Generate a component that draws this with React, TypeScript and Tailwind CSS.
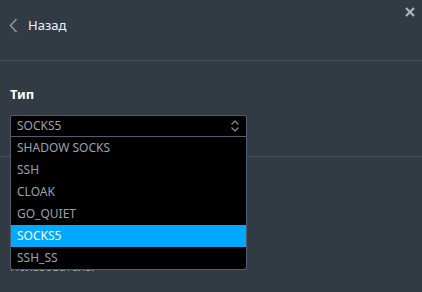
import React from "react";

const items = ["SHADOW SOCKS", "SSH", "CLOAK", "GO_QUIET", "SOCKS5", "SSH_SS"];

export default function App() {
  return (
    <div
      className="relative w-[422px] h-[292px] overflow-hidden bg-[#323a44]"
      style={{ fontFamily: '"Noto Sans", "Open Sans", sans-serif' }}
    >
      <div className="h-[61px] border-b border-[#454f5b]">
        <div className="h-[50px] flex items-center pl-[9px] gap-[10px]">
          <svg width="9" height="15" viewBox="0 0 9 15" fill="none">
            <path d="M7.5 1 L1.5 7.5 L7.5 14" stroke="#8c96a0" strokeWidth="1.6" />
          </svg>
          <span className="text-[13px] text-[#eef2f6] leading-none">Назад</span>
        </div>
      </div>
      <svg className="absolute top-[7px] left-[405px]" width="10" height="10" viewBox="0 0 10 10">
        <path d="M1 1 L9 9 M9 1 L1 9" stroke="#aab4c0" strokeWidth="2.2" />
      </svg>
      <div className="h-[96px] border-b border-[#454f5b] px-[10px] pt-[24px]">
        <div className="text-[13px] font-bold text-white leading-[18px]">Тип</div>
        <div className="relative mt-[12px] w-[237px]">
          <div className="h-[22px] bg-black border border-[#4e5f72] rounded-t-[3px] flex items-center justify-between pl-[6px] pr-[6px]">
            <span className="text-[12px] text-[#9aa3ad] leading-none">SOCKS5</span>
            <svg width="10" height="12" viewBox="0 0 10 12" fill="none">
              <path d="M1.5 4.5 L5 1 L8.5 4.5 M1.5 7.5 L5 11 L8.5 7.5" stroke="#8a939d" strokeWidth="1.2" />
            </svg>
          </div>
          <div className="absolute left-0 right-0 top-[22px] z-10 bg-black border border-t-0 border-[#4e5f72] rounded-b-[3px]">
            {items.map((it) => (
              <div
                key={it}
                className={
                  it === "SOCKS5"
                    ? "h-[22px] flex items-center pl-[6px] text-[12px] text-white bg-[#00a8ff]"
                    : "h-[22px] flex items-center pl-[6px] text-[12px] text-[#9aa3ad]"
                }
              >
                {it}
              </div>
            ))}
          </div>
        </div>
      </div>
      <div className="px-[10px] pt-[104px] text-[12px] text-[#9aa3ad] leading-none">Пользователь:</div>
    </div>
  );
}
